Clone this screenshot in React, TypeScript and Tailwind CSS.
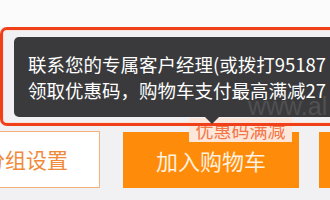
import React from "react";

export default function App() {
  return (
    <div
      className="relative flex w-[330px] h-[200px] flex-col overflow-hidden bg-[#f1f1f3]"
      style={{ fontFamily: '"Noto Sans CJK SC", "Liberation Sans", sans-serif' }}
    >
      <div className="h-[27px] shrink-0 bg-[#fbfbfb]" />

      {/* red annotation box holding the tooltip */}
      <div className="relative z-10 h-[99px] w-[360px] shrink-0 rounded-l-[7px] border-[3px] border-r-0 border-[#f0401a] pl-[11px] pt-[7px] shadow-[inset_0_0_0_1px_#fbe3dc]">
        <div className="relative h-[80px] w-[340px] rounded-[5px] bg-[#3a3a3c] pl-[14px] pt-[14px] text-[18.5px] leading-[26px] text-white whitespace-nowrap">
          <div>联系您的专属客户经理(或拨打95187</div>
          <div>领取优惠码，购物车支付最高满减27</div>
          <div className="absolute left-[191px] top-[80px] h-0 w-0 border-x-[7px] border-t-[7px] border-x-transparent border-t-[#3a3a3c]" />
        </div>
      </div>

      {/* buttons row */}
      <div className="relative mt-[5px] flex h-[57px] shrink-0 items-start gap-[23px]">
        <div className="ml-[-45px] flex h-[57px] w-[145px] shrink-0 items-center justify-end border-[1.5px] border-[#f6b07a] bg-white pr-[31px] text-[21px] text-[#f08a3a] whitespace-nowrap">
          分组设置
        </div>
        <div className="relative mt-[1px] flex h-[56px] w-[176px] shrink-0 items-center justify-center bg-[#ff8b0b] text-[22px] text-[#fff1df]">
          加入购物车
          {/* badge */}
          <div className="absolute left-[66px] top-[-14px] flex h-[24px] w-[103px] items-center justify-center bg-[#fde7da] text-[18px] leading-none text-[#f47648]">
            优惠码满减
          </div>
        </div>
        <div className="ml-[-3px] mt-[1px] h-[56px] w-[40px] shrink-0 bg-[#ff8b0b]" />
      </div>

      {/* watermark */}
      <div
        className="absolute left-[248px] top-[94px] z-20 text-[25px] leading-none text-[#505052]"
        style={{ fontFamily: '"Liberation Sans", sans-serif' }}
      >
        www.al
      </div>
    </div>
  );
}
